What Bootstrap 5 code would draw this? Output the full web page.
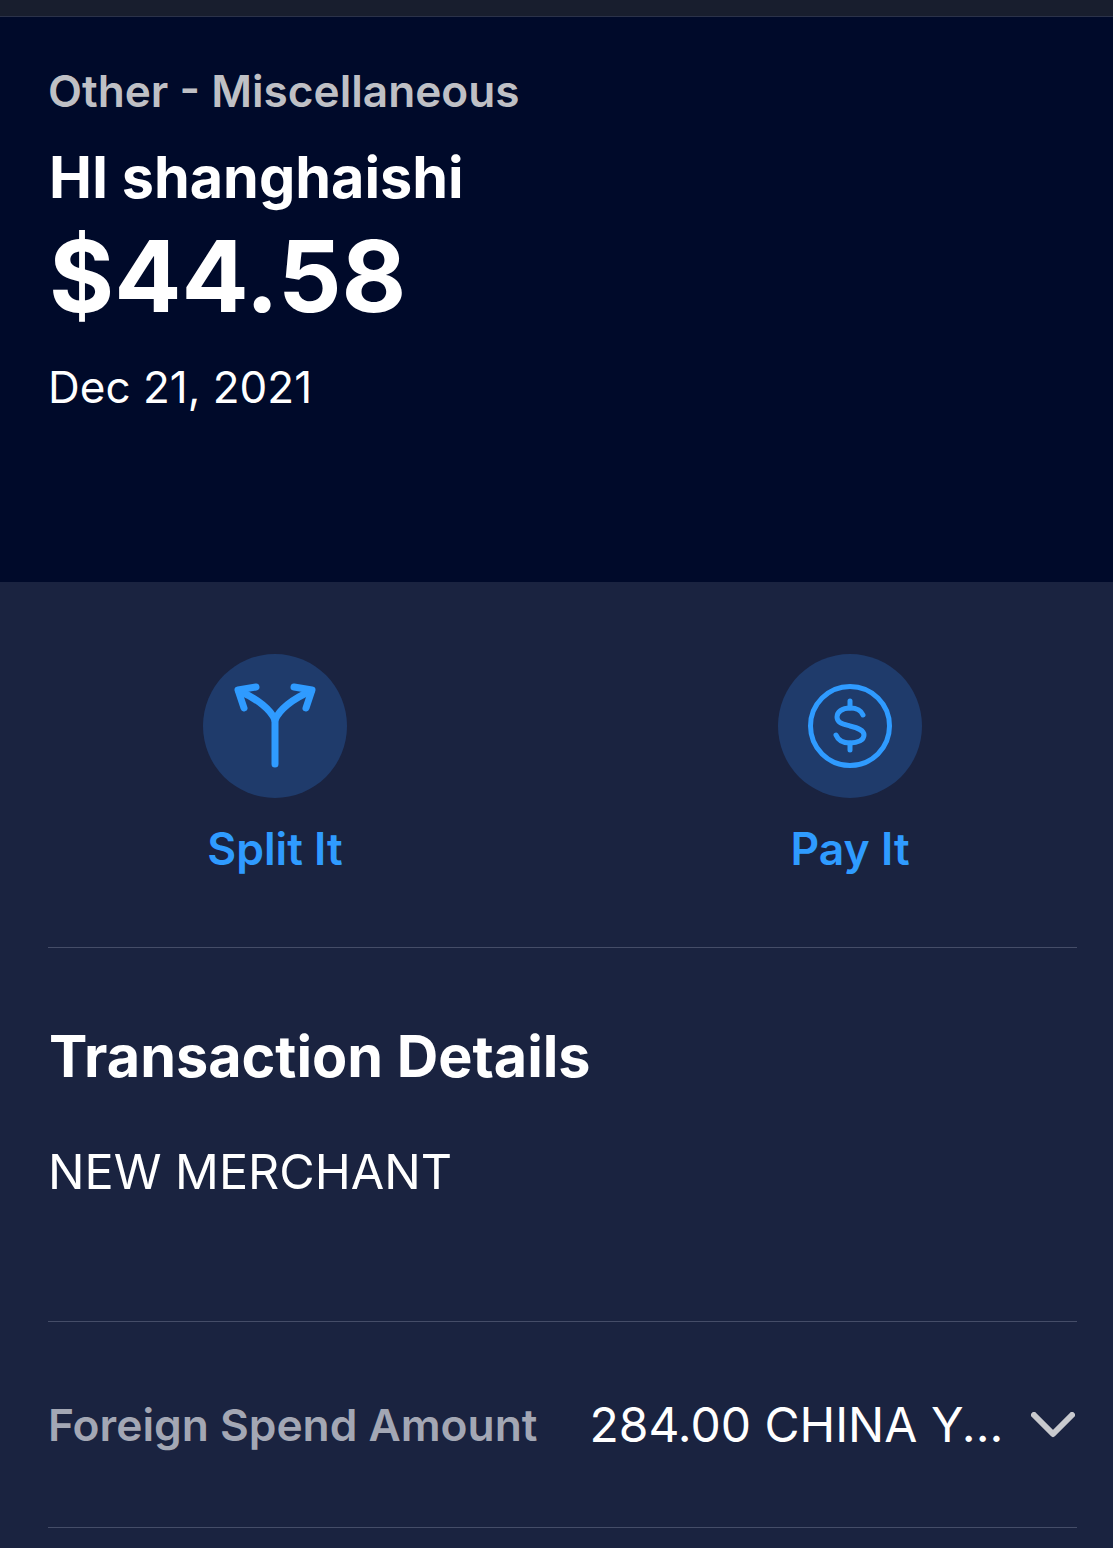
<!DOCTYPE html>
<html lang="en">
<head>
    <meta charset="UTF-8">
    <meta name="viewport" content="width=device-width, initial-scale=1.0">
    <title>Transaction</title>
    <link href="https://cdn.jsdelivr.net/npm/bootstrap@5.3.0/dist/css/bootstrap.min.css" rel="stylesheet">
    <style>
        html, body {
            height: 100%;
        }
        body {
            background-color: #1a2340;
            font-family: "Inter", "Liberation Sans", sans-serif;
            color: #fff;
            overflow: hidden;
        }
        .status-strip {
            height: 17px;
            background-color: #181e2e;
            border-bottom: 1px solid #2b3249;
        }
        .summary {
            height: 565px;
            background-color: #000a2a;
            padding: 50px 48px 0 48px;
        }
        .category {
            font-size: 44.2px;
            line-height: 48px;
            font-weight: 600;
            color: #bfc0c5;
            margin-bottom: 31px;
        }
        .merchant-name {
            font-size: 57.5px;
            line-height: 62px;
            font-weight: 700;
            margin-left: 1px;
        }
        .amount {
            font-size: 99.5px;
            line-height: 110px;
            font-weight: 700;
            margin: 13px 0 30px 1px;
        }
        .post-date {
            font-size: 44px;
            line-height: 52px;
        }
        .actions {
            padding: 72px 191px 0 203px;
            height: 365px;
        }
        .action-item {
            width: 144px;
        }
        .action-circle {
            width: 144px;
            height: 144px;
            background-color: #1f3b6b;
        }
        .action-label {
            font-size: 44.5px;
            line-height: 52px;
            font-weight: 600;
            color: #2f9bff;
            margin-top: 25px;
            white-space: nowrap;
        }
        .divider {
            height: 1px;
            margin: 0 36px 0 48px;
            background-color: #454d68;
        }
        .details {
            height: 373px;
            padding: 75px 48px 0 48px;
        }
        .details-title {
            font-size: 57.5px;
            line-height: 66px;
            font-weight: 700;
            margin: 0 0 55px 1px;
        }
        .new-merchant {
            font-size: 48.5px;
            line-height: 56px;
        }
        .spend-row {
            height: 205px;
            padding: 0 38px 0 48px;
        }
        .spend-label {
            font-size: 44.3px;
            line-height: 52px;
            font-weight: 600;
            color: #a3a7b4;
            white-space: nowrap;
        }
        .spend-value {
            font-size: 48px;
            line-height: 56px;
            margin-left: 52px;
            white-space: nowrap;
        }
    </style>
</head>
<body>
    <div class="status-strip"></div>

    <!-- Header with the charge -->
    <div class="summary">
        <div class="category">Other - Miscellaneous</div>
        <div class="merchant-name">HI shanghaishi</div>
        <div class="amount">$44.58</div>
        <div class="post-date">Dec 21, 2021</div>
    </div>

    <!-- Actions -->
    <div class="actions d-flex justify-content-between">
        <div class="action-item d-flex flex-column align-items-center">
            <div class="action-circle rounded-circle d-flex align-items-center justify-content-center">
                <svg width="144" height="144" viewBox="0 0 144 144" fill="none" stroke="#2f9bff" stroke-width="7" stroke-linecap="round" stroke-linejoin="round">
                    <path d="M72 110V66C68 56 55 45 36 37"/>
                    <path d="M72 66C76 56 89 45 108 37"/>
                    <path d="M53 33L35 36L41 54"/>
                    <path d="M91 33L109 36L103 54"/>
                </svg>
            </div>
            <div class="action-label">Split It</div>
        </div>
        <div class="action-item d-flex flex-column align-items-center">
            <div class="action-circle rounded-circle d-flex align-items-center justify-content-center">
                <svg width="144" height="144" viewBox="0 0 144 144" fill="none" stroke="#2f9bff" stroke-width="5" stroke-linecap="round" stroke-linejoin="round">
                    <circle cx="72" cy="72" r="39.5"/>
                    <path d="M85 61C83 56 78 54 72 54C64 54 59 58 59 63C59 69 65 70 72 72C80 74 86 76 86 81C86 86 80 89 72 89C65 89 60 86 58 81"/>
                    <path d="M72 47V54M72 89V96"/>
                </svg>
            </div>
            <div class="action-label">Pay It</div>
        </div>
    </div>
    <div class="divider"></div>

    <!-- Details -->
    <div class="details">
        <div class="details-title">Transaction Details</div>
        <div class="new-merchant">NEW MERCHANT</div>
    </div>
    <div class="divider"></div>

    <div class="spend-row d-flex align-items-center">
        <div class="spend-label">Foreign Spend Amount</div>
        <div class="spend-value flex-grow-1">284.00 CHINA Y...</div>
        <svg width="44" height="26" viewBox="0 0 44 26" fill="none" stroke="#c8c9ce" stroke-width="6" stroke-linecap="round" stroke-linejoin="round">
            <path d="M3 3L22 22L41 3"/>
        </svg>
    </div>
    <div class="divider"></div>

    <script src="https://cdn.jsdelivr.net/npm/bootstrap@5.3.0/dist/js/bootstrap.bundle.min.js"></script>
</body>
</html>
